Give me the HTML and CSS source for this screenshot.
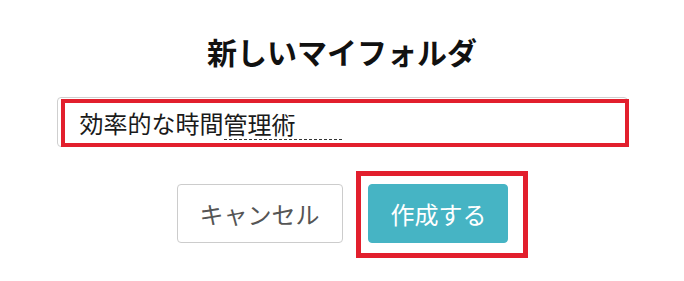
FILE: index.html
```html
<!DOCTYPE html>
<html lang="ja">
<head>
<meta charset="utf-8">
<title>新しいマイフォルダ</title>
<link rel="stylesheet" href="styles.css">
</head>
<body>
<div class="dialog">
  <h1 class="title">新しいマイフォルダ</h1>
  <div class="field-wrap">
    <div class="field"><span>効率的な時間</span><span class="composing">管理術</span></div>
  </div>
  <div class="actions">
    <button class="btn btn-cancel" type="button">キャンセル</button>
    <span class="highlight"><button class="btn btn-primary" type="button">作成する</button></span>
  </div>
</div>
</body>
</html>
```

FILE: styles.css
```css
html, body {
  margin: 0;
  padding: 0;
  background: #ffffff;
}

body {
  font-family: "Noto Sans CJK JP", "Noto Sans", sans-serif;
  color: #222;
  min-height: 281px;
}

.dialog {
  width: 571px;
  margin: 0 auto;
  padding-top: 31px;
  padding-bottom: 38px;
}

.title {
  margin: 0 0 26px;
  font-size: 30px;
  line-height: 40px;
  font-weight: 700;
  text-align: center;
  color: #111;
}

.field-wrap {
  position: relative;
}

.field-wrap::after {
  content: "";
  position: absolute;
  left: 4px;
  right: -1px;
  top: 2px;
  bottom: 0;
  border: 4px solid #e21f2d;
  pointer-events: none;
}

.field {
  box-sizing: border-box;
  height: 50px;
  border: 1px solid #cfcfcf;
  border-radius: 4px;
  padding-left: 22px;
  display: flex;
  align-items: center;
  font-size: 24px;
  color: #1a1a1a;
}

.composing {
  padding-right: 46px;
  border-bottom: 1px dashed #333;
  line-height: 30px;
  margin-top: 4px;
}

.actions {
  display: flex;
  justify-content: center;
  align-items: flex-start;
  gap: 25px;
  margin-top: 37px;
}

.btn {
  box-sizing: border-box;
  height: 59px;
  padding: 0 22px;
  margin: 0;
  font-family: inherit;
  font-size: 24px;
  line-height: 1;
  white-space: nowrap;
  border-radius: 4px;
  cursor: pointer;
}

.btn-cancel {
  background: #ffffff;
  border: 1px solid #cccccc;
  color: #555555;
  width: 166px;
}

.btn-primary {
  display: block;
  background: #46b4c4;
  border: 1px solid #46b4c4;
  color: #ffffff;
  width: 140px;
}

.highlight {
  position: relative;
  display: block;
}

.highlight::after {
  content: "";
  position: absolute;
  left: -12px;
  right: -20px;
  top: -13px;
  bottom: -15px;
  border: 5px solid #e21f2d;
  pointer-events: none;
}
```
